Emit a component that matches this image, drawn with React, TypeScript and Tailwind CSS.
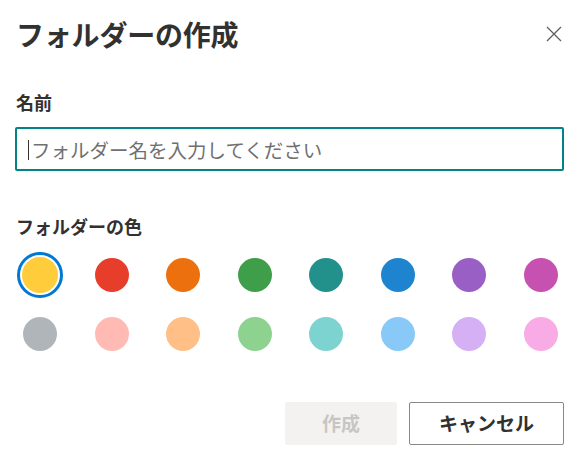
import { useState } from 'react';

const colors = [
  '#ffcd3c', '#e63e2b', '#ed700f', '#3e9e4a', '#23918b', '#1e84d0', '#9a5fc4', '#c751b0',
  '#afb5b8', '#ffbab3', '#ffbf87', '#8ed290', '#7dd3cf', '#88c9f7', '#d6b0f5', '#f8abe5',
];

function ColorDot({ color, selected, onClick }: { color: string; selected: boolean; onClick: () => void }) {
  return (
    <button
      type="button"
      onClick={onClick}
      className={`flex h-[46px] w-[46px] items-center justify-center rounded-full border-[3px] ${
        selected ? 'border-[#0078d4]' : 'border-transparent'
      }`}
    >
      <span
        className={`block rounded-full ${selected ? 'h-9 w-9' : 'h-[34px] w-[34px]'}`}
        style={{ backgroundColor: color }}
      />
    </button>
  );
}

export default function App() {
  const [name, setName] = useState('');
  const [selected, setSelected] = useState(0);

  return (
    <div
      className="flex h-[461px] w-[578px] flex-col bg-white text-[#323130]"
      style={{ fontFamily: '"Noto Sans CJK JP", "Noto Sans", sans-serif' }}
    >
      {/* header */}
      <div className="mt-4 flex h-9 items-center justify-between pl-4 pr-4">
        <h1 className="text-[28px] font-bold leading-9 tracking-[-0.2px]">フォルダーの作成</h1>
        <button type="button" className="text-[#605e5c]" aria-label="閉じる">
          <svg width="16" height="16" viewBox="0 0 16 16" fill="none" stroke="currentColor" strokeWidth="1.3">
            <path d="M1 1l14 14M15 1L1 15" />
          </svg>
        </button>
      </div>

      <label htmlFor="folder-name" className="ml-4 mt-[38px] text-[18px] font-bold leading-6">
        名前
      </label>
      <div className="relative ml-[15px] mt-[13px] h-11 w-[549px]">
        <input
          id="folder-name"
          value={name}
          onChange={(e) => setName(e.target.value)}
          placeholder="フォルダー名を入力してください"
          className="h-full w-full rounded-[2px] border-2 border-[#038387] pl-[14px] text-[19.5px] text-[#323130] outline-none placeholder:text-[#707070]"
        />
        {name === '' && <span className="pointer-events-none absolute left-[13px] top-[13px] h-5 w-px bg-[#323130]" />}
      </div>

      <div className="ml-4 mt-[43px] text-[18px] font-semibold leading-6">フォルダーの色</div>

      {/* colour picker */}
      <div className="ml-[17px] mt-[14px] flex w-[547px] flex-col gap-[13px]">
        {[0, 1].map((row) => (
          <div key={row} className="flex justify-between">
            {colors.slice(row * 8, row * 8 + 8).map((c, i) => (
              <ColorDot key={c} color={c} selected={selected === row * 8 + i} onClick={() => setSelected(row * 8 + i)} />
            ))}
          </div>
        ))}
      </div>

      {/* footer */}
      <div className="mr-[14px] mt-[45px] flex justify-end gap-3">
        <button
          type="button"
          disabled={name === ''}
          className="h-[43px] w-[112px] rounded-[2px] bg-[#f3f2f1] text-[19px] font-bold text-[#c8c6c4]"
        >
          作成
        </button>
        <button
          type="button"
          className="h-[43px] w-[155px] rounded-[2px] border border-[#8a8886] bg-white text-[19px] font-bold text-[#323130]"
        >
          キャンセル
        </button>
      </div>
    </div>
  );
}
